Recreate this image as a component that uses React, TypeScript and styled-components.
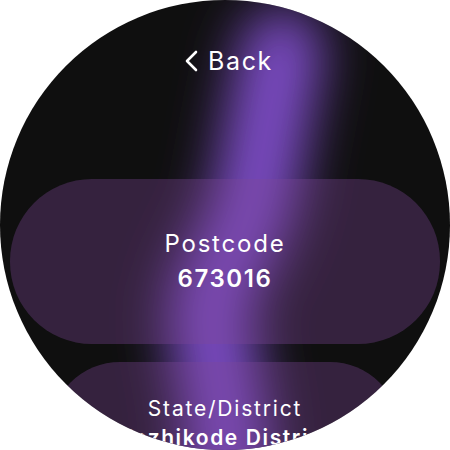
import React from "react";
import styled, { createGlobalStyle } from "styled-components";

const Global = createGlobalStyle`
  html, body { margin: 0; padding: 0; background: #ffffff; }
  body { font-family: "Inter", "Noto Sans", sans-serif; }
`;

const Screen = styled.div`
  position: relative;
  width: 450px;
  height: 450px;
  border-radius: 50%;
  overflow: hidden;
  background: #0f0f0f;
`;

const Glow = styled.svg`
  position: absolute;
  left: 0;
  top: 0;
  width: 450px;
  height: 450px;
  pointer-events: none;
`;

const Content = styled.div`
  position: relative;
  display: flex;
  flex-direction: column;
  align-items: center;
  padding-top: 46px;
`;

const BackButton = styled.div`
  display: flex;
  align-items: center;
  gap: 9px;
  height: 30px;
  color: #ffffff;
  font-size: 25px;
  font-weight: 400;
  letter-spacing: 1.6px;
  margin-left: 6px;
`;

const Card = styled.div<{ $width: number; $radius: number }>`
  width: ${(p) => p.$width}px;
  height: 165px;
  border-radius: ${(p) => p.$radius}px;
  background: rgba(126, 72, 152, 0.35);
  display: flex;
  flex-direction: column;
  align-items: center;
  justify-content: center;
  gap: 6px;
  color: #ffffff;
  box-sizing: border-box;
`;

const FirstCard = styled(Card)`
  margin-top: 103px;
`;

const SecondCard = styled(Card)`
  margin-top: 18px;
  justify-content: flex-start;
  padding-top: 34px;
  gap: 4px;
`;

const Label = styled.div<{ $size: number }>`
  font-size: ${(p) => p.$size}px;
  font-weight: 400;
  line-height: 1.2;
  letter-spacing: 1.8px;
`;

const Value = styled.div<{ $size: number }>`
  font-size: ${(p) => p.$size}px;
  font-weight: 600;
  line-height: 1.2;
  letter-spacing: 1.6px;
  white-space: nowrap;
`;

const Chevron = () => (
  <svg width="16" height="22" viewBox="0 0 16 22" fill="none">
    <path d="M13 2 L4 11 L13 20" stroke="#ffffff" strokeWidth="2.6" strokeLinecap="round" strokeLinejoin="round" />
  </svg>
);

export default function App() {
  return (
    <>
      <Global />
      <Screen>
        <Glow viewBox="0 0 450 450">
          <defs>
            <filter id="blur" filterUnits="userSpaceOnUse" x="-100" y="-100" width="650" height="650">
              <feGaussianBlur stdDeviation="26" />
            </filter>
          </defs>
          <path
            d="M 282 50 C 272 100, 262 150, 256 190 C 248 240, 206 280, 210 320 C 212 360, 228 390, 228 480"
            stroke="#7a4cc2"
            strokeWidth="84"
            fill="none"
            strokeLinecap="round"
            filter="url(#blur)"
          />
        </Glow>
        <Content>
          <BackButton>
            <Chevron />
            <span>Back</span>
          </BackButton>
          <FirstCard $width={430} $radius={82}>
            <Label $size={24}>Postcode</Label>
            <Value $size={24}>673016</Value>
          </FirstCard>
          <SecondCard $width={350} $radius={70}>
            <Label $size={21}>State/District</Label>
            <Value $size={21}>Kozhikode District</Value>
          </SecondCard>
        </Content>
      </Screen>
    </>
  );
}
